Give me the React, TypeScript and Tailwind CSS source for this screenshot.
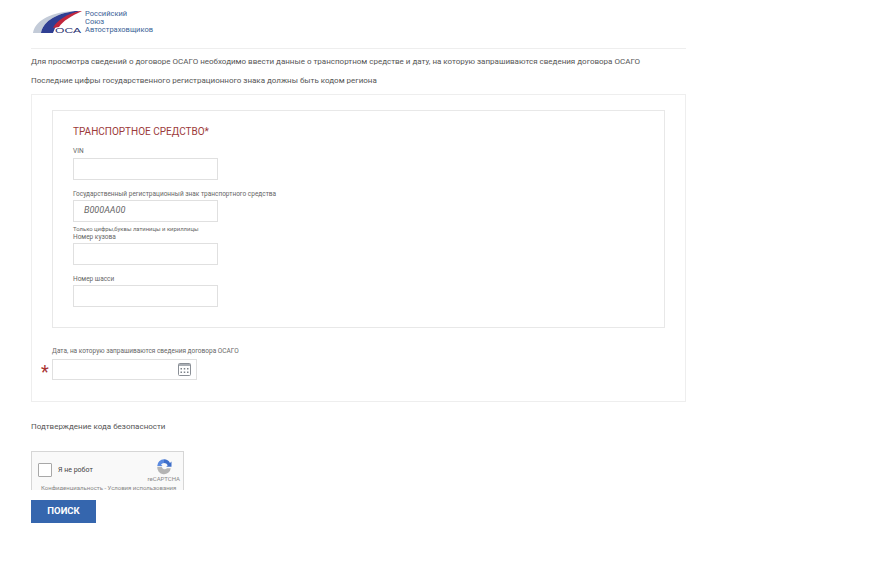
const labelCls = 'block text-[6.5px] leading-[8px] text-[#666]';
const inputCls = 'block w-[145px] h-[22px] border border-[#e0e0e0] bg-white';

function Logo() {
  return (
    <div className="flex items-start h-[40px]">
      <svg width="54" height="30" viewBox="0 0 54 30" className="mt-[8px]">
        <path d="M2 25 C4 14 16 5 42 3 L44 3 C22 6 12 15 10 25 Z" fill="#c3cbd8" />
        <path d="M10 25 C12 15 22 6 44 3 L49 3 C38 7 26 12 22 25 Z" fill="#2f3f93" />
        <path d="M22 20 C26 12 36 6 49 3 L51 3 C40 8 32 13 28 19 Z" fill="#c2263c" />
        <text x="24" y="25" fontSize="8" fontFamily="'Liberation Sans', sans-serif" fill="#27306f" textLength="26" lengthAdjust="spacingAndGlyphs">ОСА</text>
      </svg>
      <div className="mt-[10px] text-[7.5px] leading-[8px] text-[#3a6296] font-['Roboto',sans-serif]">
        <div>Российский</div>
        <div>Союз</div>
        <div>Автостраховщиков</div>
      </div>
    </div>
  );
}

function CalendarIcon() {
  return (
    <svg width="13" height="13" viewBox="0 0 13 13" fill="none">
      <rect x="0.5" y="0.5" width="12" height="12" rx="1" stroke="#8a8f96" />
      <rect x="1" y="1" width="11" height="2" fill="#a9aeb4" />
      <g fill="#7d838a">
        <rect x="2.5" y="5" width="1.5" height="1.5" />
        <rect x="5.75" y="5" width="1.5" height="1.5" />
        <rect x="9" y="5" width="1.5" height="1.5" />
        <rect x="2.5" y="8.5" width="1.5" height="1.5" />
        <rect x="5.75" y="8.5" width="1.5" height="1.5" />
        <rect x="9" y="8.5" width="1.5" height="1.5" />
      </g>
    </svg>
  );
}

function Captcha() {
  return (
    <div className="relative w-[153px] h-[39px] border border-b-0 border-[#d6d6d6] bg-[#f9f9f9] overflow-hidden">
      <div className="flex items-center pl-[6px] pt-[11px]">
        <div className="w-[14px] h-[14px] border border-[#a8a8a8] bg-white rounded-[1px]" />
        <span className="ml-[6px] text-[7px] leading-[8px] text-[#444]">Я не робот</span>
      </div>
      <svg width="18" height="18" viewBox="0 0 24 24" className="absolute left-[123px] top-[5px]">
        <path d="M12 3a9 9 0 0 1 8 5l2-2v7h-7l2-2a6 6 0 0 0-5-3z" fill="#3f6fc9" />
        <path d="M3 12a9 9 0 0 1 9-9v5a5 5 0 0 0-4 2l2 2H3z" fill="#5a8ae0" />
        <path d="M3 13h6a4 4 0 0 0 7 2h5a9 9 0 0 1-18-2z" fill="#b4b4b4" />
      </svg>
      <div className="absolute right-[3px] top-[23px] text-[6px] leading-[7px] text-[#888]">reCAPTCHA</div>
      <div className="absolute left-[9px] top-[32px] whitespace-nowrap text-[6px] leading-[7px] text-[#888]">
        Конфиденциальность - Условия использования
      </div>
    </div>
  );
}

export default function App() {
  return (
    <div className="min-h-[561px] bg-white pl-[31px] font-['Roboto',sans-serif]">
      <div className="w-[655px]">
        <Logo />
        <div className="mt-[8px] border-t border-[#eeeeee]" />
        <p className="mt-[8px] text-[8px] leading-[10px] text-[#555]">
          Для просмотра сведений о договоре ОСАГО необходимо ввести данные о транспортном средстве и дату, на которую запрашиваются сведения договора ОСАГО
        </p>
        <p className="mt-[9px] text-[8px] leading-[10px] text-[#555]">
          Последние цифры государственного регистрационного знака должны быть кодом региона
        </p>

        <div className="mt-[8px] h-[308px] border border-[#eeeeee] pl-[20px] pr-[20px] pt-[15px]">
          <div className="h-[218px] border border-[#e8e8e8] pl-[20px] pt-[15px]">
            <h2 className="text-[10px] leading-[12px] text-[#9c3a3a]">ТРАНСПОРТНОЕ СРЕДСТВО*</h2>
            <label className={`${labelCls} mt-[9px]`}>VIN</label>
            <div className={`${inputCls} mt-[3px]`} />
            <label className={`${labelCls} mt-[10px]`}>Государственный регистрационный знак транспортного средства</label>
            <div className={`${inputCls} mt-[2px] flex items-center pl-[10px] text-[9px] italic text-[#666]`}>В000АА00</div>
            <div className="mt-[4px] mb-[1px] text-[5.9px] leading-[6px] text-[#666]">Только цифры,буквы латиницы и кириллицы</div>
            <label className={labelCls}>Номер кузова</label>
            <div className={`${inputCls} mt-[2px]`} />
            <label className={`${labelCls} mt-[10px]`}>Номер шасси</label>
            <div className={`${inputCls} mt-[2px]`} />
          </div>
          <label className={`${labelCls} mt-[19px]`}>Дата, на которую запрашиваются сведения договора ОСАГО</label>
          <div className="relative mt-[4px] w-[145px] h-[21px] border border-[#e0e0e0] flex items-center justify-end pr-[5px]">
            <CalendarIcon />
            <span className="absolute left-[-12px] top-[2px] text-[18px] leading-[20px] text-[#a83232]">*</span>
          </div>
        </div>

        <p className="mt-[20px] text-[8px] leading-[10px] text-[#555]">Подтверждение кода безопасности</p>
        <div className="mt-[19px]">
          <Captcha />
        </div>
        <button className="mt-[10px] block w-[65px] h-[23px] bg-[#3566ae] text-[9.5px] font-bold text-white">ПОИСК</button>
      </div>
    </div>
  );
}
